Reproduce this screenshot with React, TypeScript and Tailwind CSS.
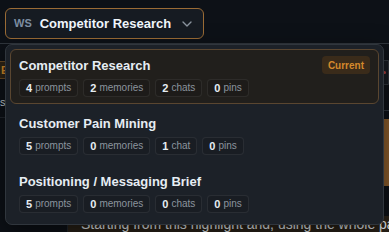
import React from "react";
import { ChevronDown } from "lucide-react";

type Workspace = {
  name: string;
  prompts: number;
  memories: number;
  chats: number;
  pins: number;
  current?: boolean;
};

const workspaces: Workspace[] = [
  { name: "Competitor Research", prompts: 4, memories: 2, chats: 2, pins: 0, current: true },
  { name: "Customer Pain Mining", prompts: 5, memories: 0, chats: 1, pins: 0 },
  { name: "Positioning / Messaging Brief", prompts: 5, memories: 0, chats: 0, pins: 0 },
];

const Stat = ({ n, label }: { n: number; label: string }) => (
  <span className="flex h-[18px] items-center gap-[3px] rounded-[4px] border border-white/[0.07] bg-black/10 px-[6px]">
    <span className="text-[11px] font-bold leading-none text-[#e6edf3]">{n}</span>
    <span className="text-[10px] leading-none text-[#8b949e]">{label}</span>
  </span>
);

const App = () => {
  return (
    <div className="relative h-[232px] w-[389px] overflow-hidden bg-[#0d1117] font-['Liberation_Sans',Arial,sans-serif]">
      <header className="h-[44px] border-b border-[#30363d] pl-[5px] pt-[8px]">
        <button className="flex h-[31px] items-center gap-2 rounded-[6px] border border-[#9a6b35] bg-[#161b22] pl-2 pr-2">
          <span className="text-[11px] font-bold leading-none text-[#7d8ea3]">WS</span>
          <span className="text-[13px] font-bold leading-none text-[#f0f6fc]">Competitor Research</span>
          <ChevronDown size={16} strokeWidth={2} className="text-[#8b949e]" />
        </button>
      </header>

      <div className="flex h-[188px]">
        <aside className="w-[68px] shrink-0 border-r border-[#21262d] pt-[17px]">
          <div className="flex h-[18px] items-center border-y border-[#6b4b25] bg-[#2e2416] px-[1px] text-[11px] font-bold text-[#d18a2a]">
            Edit
          </div>
          <div className="mt-[15px] border-b border-[#21262d] pb-[6px] text-[11px] text-[#c9d1d9]">
            session
          </div>
        </aside>
        <main className="flex min-w-0 flex-1 flex-col">
          <div className="flex h-[175px] justify-end">
            <div className="w-[10px] pt-[16px]">
              <div className="flex h-[25px] items-center justify-center rounded-l-[4px] border border-[#30363d] bg-[#161b22]">
                <span className="h-[3px] w-[3px] rounded-full bg-[#b04040]" />
              </div>
              <div className="mt-[25px] border-t border-[#30363d]" />
              <div className="mt-[8px] h-[67px] bg-[#8a5c2c]" />
            </div>
          </div>
          <p className="whitespace-nowrap bg-[#2a2218] pl-[13px] text-[14px] leading-[16px] text-[#e6edf3]">
            Starting from this highlight and, using the whole page as context
          </p>
        </main>
      </div>

      <div className="absolute left-[5px] top-[44px] flex w-[379px] flex-col gap-[3px] rounded-[7px] border border-[#30363d] bg-[#1c2128] p-1 shadow-[0_8px_24px_rgba(0,0,0,0.5)]">
        {workspaces.map((ws) => (
          <div
            key={ws.name}
            className={
              ws.current
                ? "flex flex-col gap-[5px] rounded-[6px] border border-[#5a4630] bg-[#211f1c] px-2 pb-[6px] pt-[6px]"
                : "flex flex-col gap-[5px] rounded-[6px] border border-transparent px-2 pb-[6px] pt-[6px]"
            }
          >
            <div className="flex h-[18px] items-center justify-between">
              <span className="text-[13px] font-bold leading-none text-[#e6edf3]">{ws.name}</span>
              {ws.current && (
                <span className="flex h-[18px] items-center rounded-[4px] bg-[#3a2b1a] px-[6px] text-[10px] font-bold text-[#d4892c]">
                  Current
                </span>
              )}
            </div>
            <div className="flex gap-[5px]">
              <Stat n={ws.prompts} label="prompts" />
              <Stat n={ws.memories} label="memories" />
              <Stat n={ws.chats} label={ws.chats === 1 ? "chat" : "chats"} />
              <Stat n={ws.pins} label="pins" />
            </div>
          </div>
        ))}
      </div>
    </div>
  );
};

export default App;
